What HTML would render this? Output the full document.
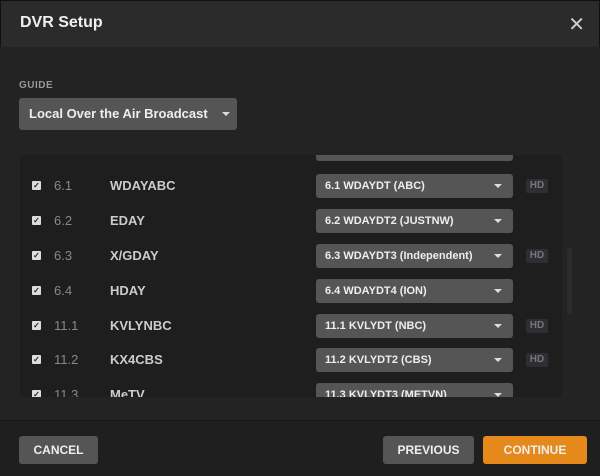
<!DOCTYPE html>
<html><head><style>
*{margin:0;padding:0;box-sizing:border-box}
body{width:600px;height:476px;background:#1c1c1c;font-family:"Liberation Sans",sans-serif;overflow:hidden;position:relative;color:#ddd}
.hdr{position:absolute;left:0;top:0;width:600px;height:47px;background:#2b2b2b;border:1px solid #111;border-bottom:none}
.hdr h1{position:absolute;left:19px;top:13px;font-size:16px;font-weight:bold;color:#f0f0f0}
.x{position:absolute;right:14px;top:11px;font-size:20px;color:#ccc}
.main{position:absolute;left:0;top:47px;width:600px;height:373px;background:#232323}
.lbl{position:absolute;left:19px;top:80px;font-size:10px;font-weight:bold;color:#999;letter-spacing:.5px}
.guide{position:absolute;left:19px;top:98px;width:218px;height:32px;background:#555;border-radius:3px;font-size:13px;font-weight:bold;color:#eee;padding:8px 10px}
.arr{position:absolute;width:0;height:0;border-left:4px solid transparent;border-right:4px solid transparent;border-top:4px solid #ddd}
.list{position:absolute;left:20px;top:155px;width:542px;height:242px;background:#1e1e1e;overflow:hidden}
.row{position:absolute;left:0;width:542px;height:35px;font-size:13px}
.cb{position:absolute;left:12px;top:-5px;width:9px;height:9px;background:#ddd;border-radius:1px;font-size:8px;color:#222;line-height:9px;text-align:center;font-weight:bold}
.num{position:absolute;left:34px;top:-8px;color:#888}
.nm{position:absolute;left:90px;top:-8px;color:#ccc;font-weight:bold}
.dd{position:absolute;left:296px;top:-12px;width:197px;height:24px;background:#555;border-radius:3px;font-size:11px;font-weight:bold;color:#eee;padding:6px 9px}
.hd{position:absolute;left:506px;top:-7px;width:22px;height:14px;background:#2e2e35;color:#777;font-size:10px;font-weight:bold;text-align:center;line-height:14px;border-radius:2px}
.sb{position:absolute;left:567px;top:248px;width:5px;height:67px;background:#2c2c30;border-radius:3px}
.foot{position:absolute;left:0;top:420px;width:600px;height:56px;background:#1f1f1f;border-top:1px solid #141414}
.btn{position:absolute;top:436px;height:28px;border-radius:3px;font-size:12px;font-weight:bold;color:#eee;text-align:center;line-height:28px}
</style></head><body>
<div class="hdr"><h1>DVR Setup</h1><div class="x">✕</div></div>
<div class="main"></div>
<div class="lbl">GUIDE</div>
<div class="guide">Local Over the Air Broadcast<div class="arr" style="left:203px;top:14px"></div></div>
<div class="list">
<div class="dd" style="top:-12px;left:296px;height:18px"></div>
<div class="row" style="top:31px"><div class="cb">✓</div><div class="num">6.1</div><div class="nm">WDAYABC</div><div class="dd">6.1 WDAYDT (ABC)<div class="arr" style="left:178px;top:10px"></div></div><div class="hd">HD</div></div>
<div class="row" style="top:66px"><div class="cb">✓</div><div class="num">6.2</div><div class="nm">EDAY</div><div class="dd">6.2 WDAYDT2 (JUSTNW)<div class="arr" style="left:178px;top:10px"></div></div></div>
<div class="row" style="top:101px"><div class="cb">✓</div><div class="num">6.3</div><div class="nm">X/GDAY</div><div class="dd">6.3 WDAYDT3 (Independent)<div class="arr" style="left:178px;top:10px"></div></div><div class="hd">HD</div></div>
<div class="row" style="top:136px"><div class="cb">✓</div><div class="num">6.4</div><div class="nm">HDAY</div><div class="dd">6.4 WDAYDT4 (ION)<div class="arr" style="left:178px;top:10px"></div></div></div>
<div class="row" style="top:171px"><div class="cb">✓</div><div class="num">11.1</div><div class="nm">KVLYNBC</div><div class="dd">11.1 KVLYDT (NBC)<div class="arr" style="left:178px;top:10px"></div></div><div class="hd">HD</div></div>
<div class="row" style="top:205px"><div class="cb">✓</div><div class="num">11.2</div><div class="nm">KX4CBS</div><div class="dd">11.2 KVLYDT2 (CBS)<div class="arr" style="left:178px;top:10px"></div></div><div class="hd">HD</div></div>
<div class="row" style="top:240px"><div class="cb">✓</div><div class="num">11.3</div><div class="nm">MeTV</div><div class="dd">11.3 KVLYDT3 (METVN)<div class="arr" style="left:178px;top:10px"></div></div></div>
</div>
<div class="sb"></div>
<div class="foot"></div>
<div class="btn" style="left:19px;width:79px;background:#555">CANCEL</div>
<div class="btn" style="left:383px;width:91px;background:#555">PREVIOUS</div>
<div class="btn" style="left:483px;width:104px;background:#e5891a">CONTINUE</div>
</body></html>
